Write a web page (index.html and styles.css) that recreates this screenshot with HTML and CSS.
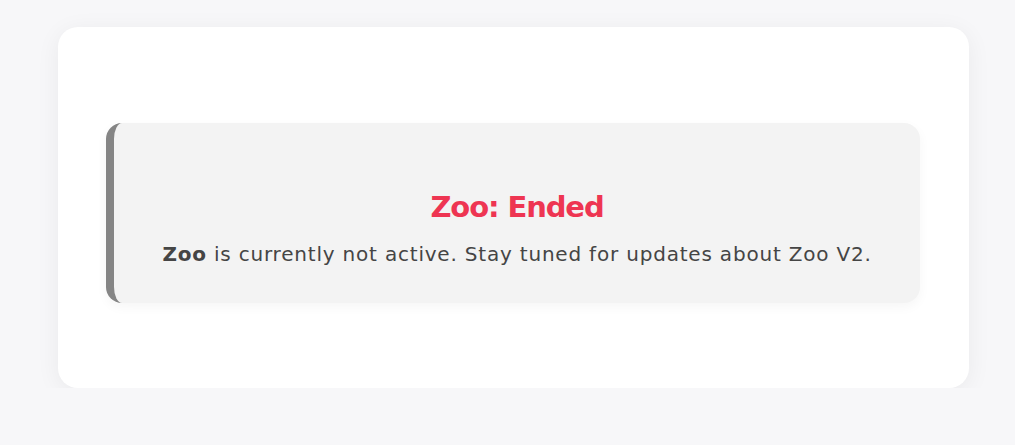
FILE: index.html
```html
<!DOCTYPE html>
<html lang="en">
<head>
<meta charset="utf-8">
<link rel="stylesheet" href="styles.css">
</head>
<body>
<div class="page">
  <div class="card">
    <div class="notice">
      <h2 class="title">Zoo: Ended</h2>
      <p class="text"><strong>Zoo</strong> is currently not active. Stay tuned for updates about Zoo V2.</p>
    </div>
  </div>
</div>
</body>
</html>
```
FILE: styles.css
```css
html, body {
  margin: 0;
  padding: 0;
  background: #f7f7f9;
  font-family: "DejaVu Sans", "Open Sans", sans-serif;
}
.page {
  padding: 27px 46px 0 58px;
}
.card {
  background: #ffffff;
  border-radius: 20px;
  box-shadow: 0 4px 24px rgba(20, 20, 40, 0.06);
  height: 361px;
  box-sizing: border-box;
  padding: 96px 49px 0 48px;
}
.notice {
  background: #f3f3f3;
  border-left: 8px solid #858585;
  border-radius: 16px;
  height: 180px;
  box-sizing: border-box;
  padding: 66px 20px 0;
  text-align: center;
  box-shadow: 0 4px 12px rgba(0, 0, 0, 0.04);
}
.title {
  margin: 0;
  color: #ee3552;
  font-size: 29px;
  font-weight: 700;
  line-height: 36px;
  letter-spacing: -1.1px;
}
.text {
  margin: 15px 0 0;
  color: #454545;
  font-size: 20px;
  line-height: 28px;
  letter-spacing: 0.8px;
}
.text strong {
  font-weight: 700;
}
```
